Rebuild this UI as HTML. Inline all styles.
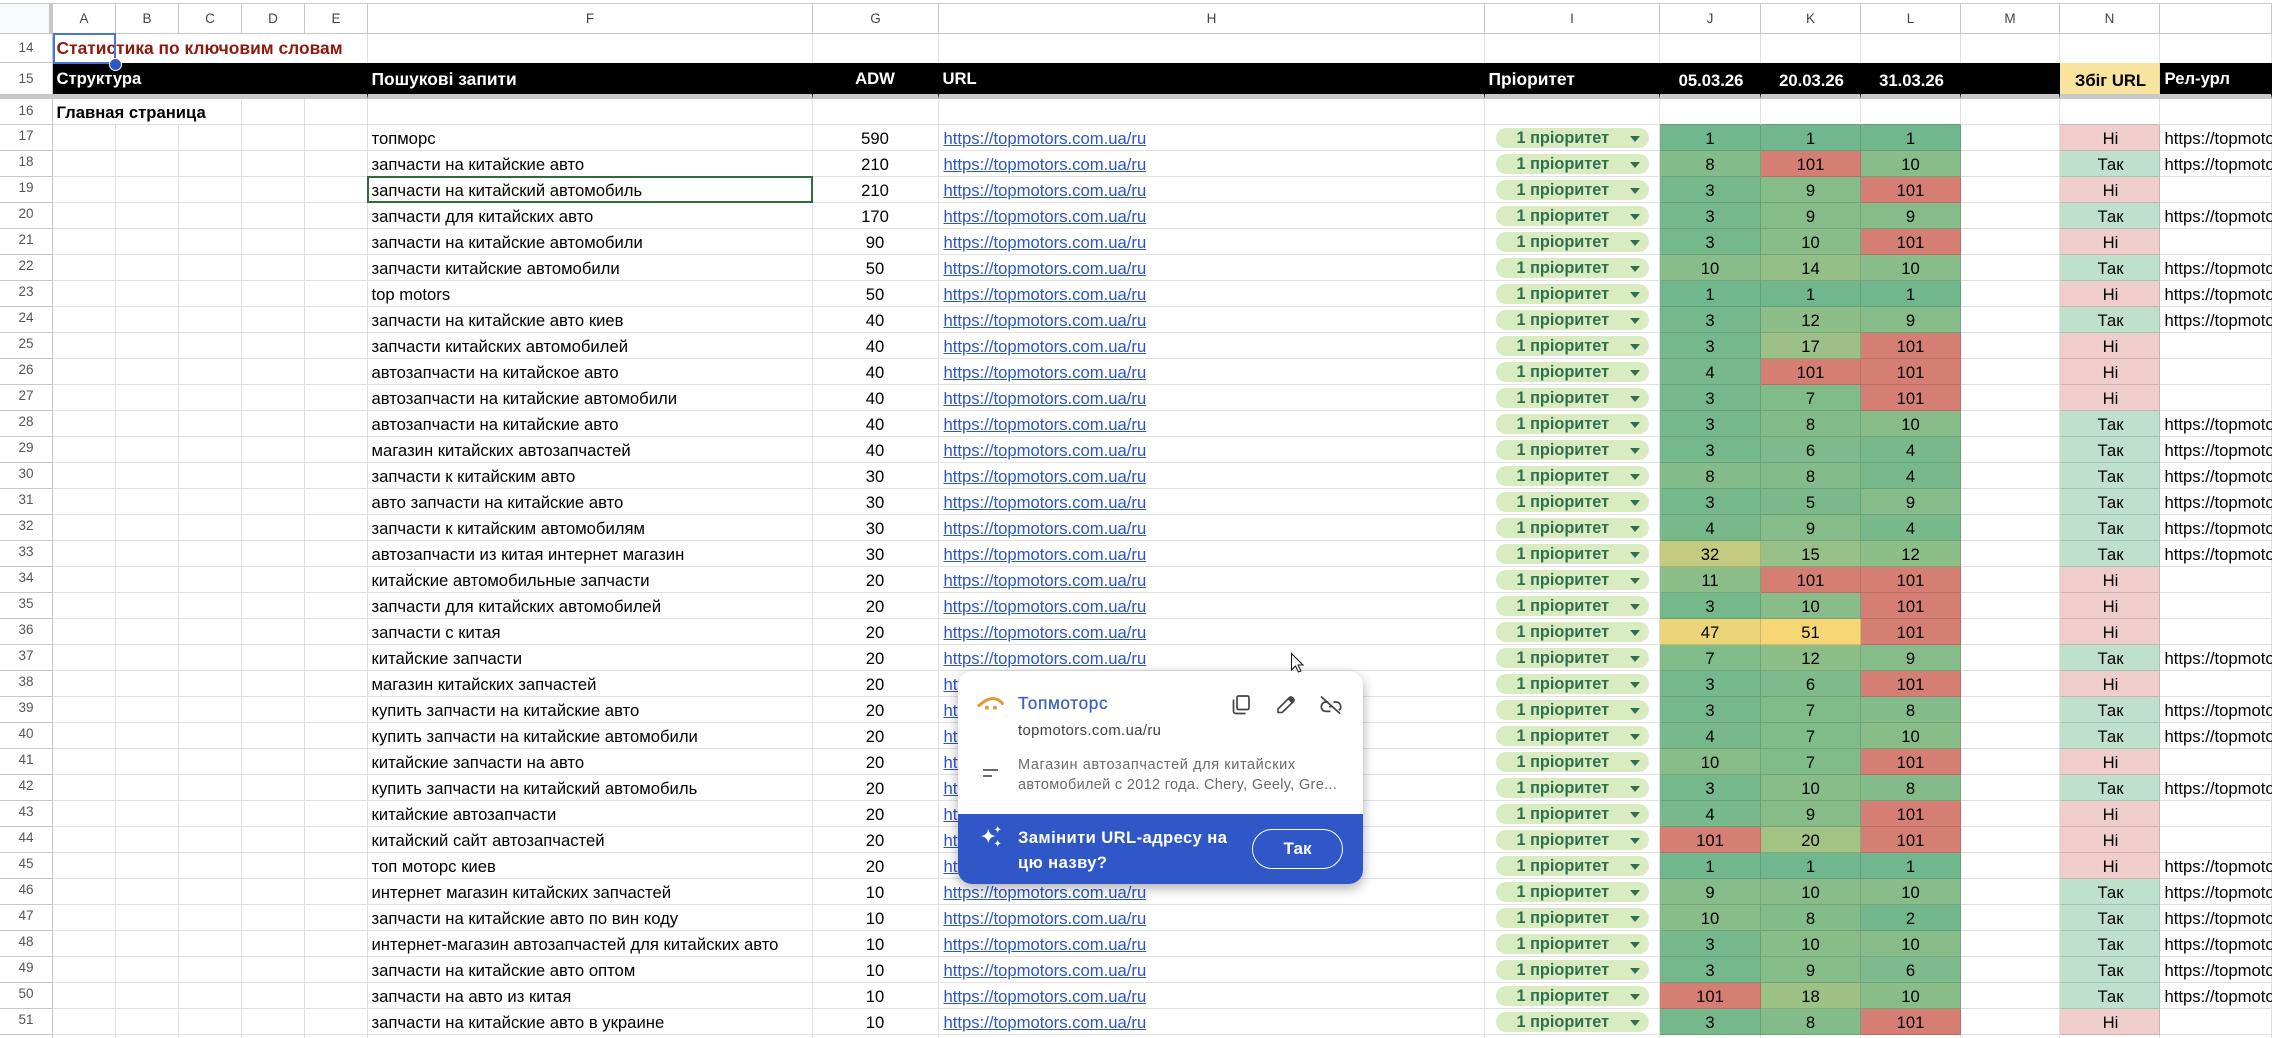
<!DOCTYPE html>
<html lang="uk"><head><meta charset="utf-8"><title>Статистика по ключовим словам</title>
<style>
html,body{margin:0;padding:0;width:2272px;height:1038px;overflow:hidden;background:#fff}
body{position:relative;font-family:"Liberation Sans",Arial,sans-serif;color:#000}
table{position:absolute;left:0;top:3px;width:2272px;table-layout:fixed;border-collapse:separate;border-spacing:0;font-size:16.67px;line-height:18px}
td,th{box-sizing:border-box;height:26px;padding:2px 4.5px 0 3.5px;border-right:1px solid #e1e1e1;border-bottom:1px solid #e1e1e1;white-space:nowrap;overflow:visible;font-weight:400;vertical-align:middle;text-align:left}
td:last-child{padding-left:4.5px}
th{border-right:1px solid #c7c7c7;border-bottom:1px solid #c7c7c7;text-align:center;font-size:13.5px;color:#555;padding:0 0 4px 0}
.hd th,.hd td{height:31px;border-top:1px solid #c7c7c7;border-bottom:1px solid #c7c7c7;border-right:1px solid #c7c7c7;text-align:center;font-size:13.5px;color:#444;padding:0}
.hd th{background:#f8f9fa;border-right:4px solid #c7c7c7}
.t14 td{height:29px;border-bottom:0;padding-top:0}
.t14 th{height:29px;padding:0}
.t15 td,.t15 th{height:36px;border-bottom:5px solid #c7c7c7}
.t15 th{padding:0}
.t15 td{background:#000;background-clip:padding-box;color:#fff;font-weight:700;border-right-color:#000;padding-top:1px}
.t15 .d{padding:5px 3px 0 5px}
.t15 .w{font-size:17.4px}
.t16 th{padding:0 0 1px 0}
.ttl{color:#8e1a0e;font-weight:700;font-size:17.4px}
b{font-weight:700}
.c{text-align:center}
a{color:#2c55c4;text-decoration:underline;margin-left:1px}
.s{display:block;position:relative;top:-1px;box-sizing:border-box;width:153px;height:20px;margin-left:7px;padding-left:21px;border-radius:10px;background:#d9ecc1;color:#2f6f4d;font-weight:700;font-size:16.3px;line-height:21px}
.s:after{content:"";position:absolute;left:134px;top:8px;border-left:5.5px solid transparent;border-right:5.5px solid transparent;border-top:6px solid #2f6f4d}
.h,.n{text-align:center;border-right-color:rgba(0,0,0,.13);border-bottom-color:rgba(0,0,0,.13)}
.h{padding:2px 4px 0 4px}
.n{padding:2px 2.5px 0 4.5px}
.tn{border-bottom-color:#6e9e82}
.tm{border-bottom-color:#c9b6b4}
.v1{background:#70b78d}.v2{background:#73b88d}.v3{background:#75b88c}.v4{background:#78b98c}.v5{background:#7bb98b}.v6{background:#7eba8b}.v7{background:#80bb8a}.v8{background:#83bb8a}.v9{background:#86bc89}.v10{background:#88bd89}.v11{background:#8bbd88}.v12{background:#8ebe88}.v14{background:#93bf87}.v15{background:#96c087}.v17{background:#9bc186}.v18{background:#9ec285}.v20{background:#a3c384}.v32{background:#c4ca7f}.v47{background:#ecd478}.v51{background:#f7d676}.v101{background:#d57f74}
.no{background:#eecdcb}.yes{background:#bee0cd}
.zb{background:#f9e49f!important;color:#000!important;text-align:center;border-right-color:#e8d58f!important;padding:5px 2.5px 0 4.5px!important}
.sel{position:absolute;box-sizing:border-box;left:53px;top:33px;width:63px;height:31px;border:2px solid #4a74d6}
.dot{position:absolute;left:109px;top:58px;width:13px;height:13px;box-sizing:border-box;border-radius:50%;background:#2f57c8;border:1px solid #fff}
.f19{position:absolute;box-sizing:border-box;left:367px;top:176px;width:446px;height:27px;border:2px solid #2f6b3c}
.pop{position:absolute;left:958px;top:671px;width:405px;height:213px;border-radius:14px;background:#fff;box-shadow:0 4px 12px rgba(0,0,0,.33);overflow:hidden}
.pop div{position:absolute;white-space:nowrap}
.p1{left:60px;top:22px;font-size:17.2px;line-height:20px;color:#3a5fc6;letter-spacing:.65px;-webkit-text-stroke:.25px #3a5fc6}
.p2{left:60px;top:50px;font-size:14.8px;line-height:20px;color:#3c3f43;letter-spacing:.4px}
.p3{left:60px;top:84px;font-size:14.5px;line-height:20px;color:#6a6a6a;letter-spacing:.6px}
.p3 span{letter-spacing:.32px}
.p4{left:0;top:143px;width:405px;height:70px;background:#2f57c8}
.p5{left:60px;top:153.500px;font-size:16.6px;line-height:25px;color:#fff;font-weight:700;letter-spacing:.4px}
.p6{left:294px;top:158px;box-sizing:border-box;width:91px;height:40px;border:1px solid #fff;border-radius:20px;color:#fff;font-weight:700;font-size:17px;line-height:38px;text-align:center}
svg{position:absolute;left:0;top:0}
</style></head><body>
<table>
<colgroup><col style="width:53px"><col style="width:63px"><col style="width:63px"><col style="width:63px"><col style="width:63px"><col style="width:63px"><col style="width:445px"><col style="width:126px"><col style="width:546px"><col style="width:175px"><col style="width:101px"><col style="width:100px"><col style="width:100px"><col style="width:99px"><col style="width:100px"><col style="width:112px"></colgroup>
<tr class="hd"><th></th><td>A</td><td>B</td><td>C</td><td>D</td><td>E</td><td>F</td><td>G</td><td>H</td><td>I</td><td>J</td><td>K</td><td>L</td><td>M</td><td>N</td><td></td></tr>
<tr class="t14"><th>14</th><td colspan="5"><span class="ttl">Статистика по ключовим словам</span></td><td></td><td></td><td></td><td></td><td></td><td></td><td></td><td></td><td></td><td></td></tr>
<tr class="t15"><th>15</th><td colspan="5">Структура</td><td class="w">Пошукові запити</td><td class="c">ADW</td><td>URL</td><td class="w">Пріоритет</td><td class="c d">05.03.26</td><td class="c d">20.03.26</td><td class="c d">31.03.26</td><td></td><td class="zb">Збіг URL</td><td>Рел-урл</td></tr>
<tr class="t16"><th>16</th><td colspan="3"><b>Главная страница</b></td><td></td><td></td><td></td><td></td><td></td><td></td><td class="tn"></td><td class="tn"></td><td class="tn"></td><td></td><td class="tm"></td><td></td></tr>
<tr><th>17</th><td></td><td></td><td></td><td></td><td></td><td>топморс</td><td class="c">590</td><td><a>https://topmotors.com.ua/ru</a></td><td><span class="s">1 пріоритет</span></td><td class="h v1">1</td><td class="h v1">1</td><td class="h v1">1</td><td></td><td class="n no">Ні</td><td>https://topmotors</td></tr>
<tr><th>18</th><td></td><td></td><td></td><td></td><td></td><td>запчасти на китайские авто</td><td class="c">210</td><td><a>https://topmotors.com.ua/ru</a></td><td><span class="s">1 пріоритет</span></td><td class="h v8">8</td><td class="h v101">101</td><td class="h v10">10</td><td></td><td class="n yes">Так</td><td>https://topmotors</td></tr>
<tr><th>19</th><td></td><td></td><td></td><td></td><td></td><td>запчасти на китайский автомобиль</td><td class="c">210</td><td><a>https://topmotors.com.ua/ru</a></td><td><span class="s">1 пріоритет</span></td><td class="h v3">3</td><td class="h v9">9</td><td class="h v101">101</td><td></td><td class="n no">Ні</td><td></td></tr>
<tr><th>20</th><td></td><td></td><td></td><td></td><td></td><td>запчасти для китайских авто</td><td class="c">170</td><td><a>https://topmotors.com.ua/ru</a></td><td><span class="s">1 пріоритет</span></td><td class="h v3">3</td><td class="h v9">9</td><td class="h v9">9</td><td></td><td class="n yes">Так</td><td>https://topmotors</td></tr>
<tr><th>21</th><td></td><td></td><td></td><td></td><td></td><td>запчасти на китайские автомобили</td><td class="c">90</td><td><a>https://topmotors.com.ua/ru</a></td><td><span class="s">1 пріоритет</span></td><td class="h v3">3</td><td class="h v10">10</td><td class="h v101">101</td><td></td><td class="n no">Ні</td><td></td></tr>
<tr><th>22</th><td></td><td></td><td></td><td></td><td></td><td>запчасти китайские автомобили</td><td class="c">50</td><td><a>https://topmotors.com.ua/ru</a></td><td><span class="s">1 пріоритет</span></td><td class="h v10">10</td><td class="h v14">14</td><td class="h v10">10</td><td></td><td class="n yes">Так</td><td>https://topmotors</td></tr>
<tr><th>23</th><td></td><td></td><td></td><td></td><td></td><td>top motors</td><td class="c">50</td><td><a>https://topmotors.com.ua/ru</a></td><td><span class="s">1 пріоритет</span></td><td class="h v1">1</td><td class="h v1">1</td><td class="h v1">1</td><td></td><td class="n no">Ні</td><td>https://topmotors</td></tr>
<tr><th>24</th><td></td><td></td><td></td><td></td><td></td><td>запчасти на китайские авто киев</td><td class="c">40</td><td><a>https://topmotors.com.ua/ru</a></td><td><span class="s">1 пріоритет</span></td><td class="h v3">3</td><td class="h v12">12</td><td class="h v9">9</td><td></td><td class="n yes">Так</td><td>https://topmotors</td></tr>
<tr><th>25</th><td></td><td></td><td></td><td></td><td></td><td>запчасти китайских автомобилей</td><td class="c">40</td><td><a>https://topmotors.com.ua/ru</a></td><td><span class="s">1 пріоритет</span></td><td class="h v3">3</td><td class="h v17">17</td><td class="h v101">101</td><td></td><td class="n no">Ні</td><td></td></tr>
<tr><th>26</th><td></td><td></td><td></td><td></td><td></td><td>автозапчасти на китайское авто</td><td class="c">40</td><td><a>https://topmotors.com.ua/ru</a></td><td><span class="s">1 пріоритет</span></td><td class="h v4">4</td><td class="h v101">101</td><td class="h v101">101</td><td></td><td class="n no">Ні</td><td></td></tr>
<tr><th>27</th><td></td><td></td><td></td><td></td><td></td><td>автозапчасти на китайские автомобили</td><td class="c">40</td><td><a>https://topmotors.com.ua/ru</a></td><td><span class="s">1 пріоритет</span></td><td class="h v3">3</td><td class="h v7">7</td><td class="h v101">101</td><td></td><td class="n no">Ні</td><td></td></tr>
<tr><th>28</th><td></td><td></td><td></td><td></td><td></td><td>автозапчасти на китайские авто</td><td class="c">40</td><td><a>https://topmotors.com.ua/ru</a></td><td><span class="s">1 пріоритет</span></td><td class="h v3">3</td><td class="h v8">8</td><td class="h v10">10</td><td></td><td class="n yes">Так</td><td>https://topmotors</td></tr>
<tr><th>29</th><td></td><td></td><td></td><td></td><td></td><td>магазин китайских автозапчастей</td><td class="c">40</td><td><a>https://topmotors.com.ua/ru</a></td><td><span class="s">1 пріоритет</span></td><td class="h v3">3</td><td class="h v6">6</td><td class="h v4">4</td><td></td><td class="n yes">Так</td><td>https://topmotors</td></tr>
<tr><th>30</th><td></td><td></td><td></td><td></td><td></td><td>запчасти к китайским авто</td><td class="c">30</td><td><a>https://topmotors.com.ua/ru</a></td><td><span class="s">1 пріоритет</span></td><td class="h v8">8</td><td class="h v8">8</td><td class="h v4">4</td><td></td><td class="n yes">Так</td><td>https://topmotors</td></tr>
<tr><th>31</th><td></td><td></td><td></td><td></td><td></td><td>авто запчасти на китайские авто</td><td class="c">30</td><td><a>https://topmotors.com.ua/ru</a></td><td><span class="s">1 пріоритет</span></td><td class="h v3">3</td><td class="h v5">5</td><td class="h v9">9</td><td></td><td class="n yes">Так</td><td>https://topmotors</td></tr>
<tr><th>32</th><td></td><td></td><td></td><td></td><td></td><td>запчасти к китайским автомобилям</td><td class="c">30</td><td><a>https://topmotors.com.ua/ru</a></td><td><span class="s">1 пріоритет</span></td><td class="h v4">4</td><td class="h v9">9</td><td class="h v4">4</td><td></td><td class="n yes">Так</td><td>https://topmotors</td></tr>
<tr><th>33</th><td></td><td></td><td></td><td></td><td></td><td>автозапчасти из китая интернет магазин</td><td class="c">30</td><td><a>https://topmotors.com.ua/ru</a></td><td><span class="s">1 пріоритет</span></td><td class="h v32">32</td><td class="h v15">15</td><td class="h v12">12</td><td></td><td class="n yes">Так</td><td>https://topmotors</td></tr>
<tr><th>34</th><td></td><td></td><td></td><td></td><td></td><td>китайские автомобильные запчасти</td><td class="c">20</td><td><a>https://topmotors.com.ua/ru</a></td><td><span class="s">1 пріоритет</span></td><td class="h v11">11</td><td class="h v101">101</td><td class="h v101">101</td><td></td><td class="n no">Ні</td><td></td></tr>
<tr><th>35</th><td></td><td></td><td></td><td></td><td></td><td>запчасти для китайских автомобилей</td><td class="c">20</td><td><a>https://topmotors.com.ua/ru</a></td><td><span class="s">1 пріоритет</span></td><td class="h v3">3</td><td class="h v10">10</td><td class="h v101">101</td><td></td><td class="n no">Ні</td><td></td></tr>
<tr><th>36</th><td></td><td></td><td></td><td></td><td></td><td>запчасти с китая</td><td class="c">20</td><td><a>https://topmotors.com.ua/ru</a></td><td><span class="s">1 пріоритет</span></td><td class="h v47">47</td><td class="h v51">51</td><td class="h v101">101</td><td></td><td class="n no">Ні</td><td></td></tr>
<tr><th>37</th><td></td><td></td><td></td><td></td><td></td><td>китайские запчасти</td><td class="c">20</td><td><a>https://topmotors.com.ua/ru</a></td><td><span class="s">1 пріоритет</span></td><td class="h v7">7</td><td class="h v12">12</td><td class="h v9">9</td><td></td><td class="n yes">Так</td><td>https://topmotors</td></tr>
<tr><th>38</th><td></td><td></td><td></td><td></td><td></td><td>магазин китайских запчастей</td><td class="c">20</td><td><a>https://topmotors.com.ua/ru</a></td><td><span class="s">1 пріоритет</span></td><td class="h v3">3</td><td class="h v6">6</td><td class="h v101">101</td><td></td><td class="n no">Ні</td><td></td></tr>
<tr><th>39</th><td></td><td></td><td></td><td></td><td></td><td>купить запчасти на китайские авто</td><td class="c">20</td><td><a>https://topmotors.com.ua/ru</a></td><td><span class="s">1 пріоритет</span></td><td class="h v3">3</td><td class="h v7">7</td><td class="h v8">8</td><td></td><td class="n yes">Так</td><td>https://topmotors</td></tr>
<tr><th>40</th><td></td><td></td><td></td><td></td><td></td><td>купить запчасти на китайские автомобили</td><td class="c">20</td><td><a>https://topmotors.com.ua/ru</a></td><td><span class="s">1 пріоритет</span></td><td class="h v4">4</td><td class="h v7">7</td><td class="h v10">10</td><td></td><td class="n yes">Так</td><td>https://topmotors</td></tr>
<tr><th>41</th><td></td><td></td><td></td><td></td><td></td><td>китайские запчасти на авто</td><td class="c">20</td><td><a>https://topmotors.com.ua/ru</a></td><td><span class="s">1 пріоритет</span></td><td class="h v10">10</td><td class="h v7">7</td><td class="h v101">101</td><td></td><td class="n no">Ні</td><td></td></tr>
<tr><th>42</th><td></td><td></td><td></td><td></td><td></td><td>купить запчасти на китайский автомобиль</td><td class="c">20</td><td><a>https://topmotors.com.ua/ru</a></td><td><span class="s">1 пріоритет</span></td><td class="h v3">3</td><td class="h v10">10</td><td class="h v8">8</td><td></td><td class="n yes">Так</td><td>https://topmotors</td></tr>
<tr><th>43</th><td></td><td></td><td></td><td></td><td></td><td>китайские автозапчасти</td><td class="c">20</td><td><a>https://topmotors.com.ua/ru</a></td><td><span class="s">1 пріоритет</span></td><td class="h v4">4</td><td class="h v9">9</td><td class="h v101">101</td><td></td><td class="n no">Ні</td><td></td></tr>
<tr><th>44</th><td></td><td></td><td></td><td></td><td></td><td>китайский сайт автозапчастей</td><td class="c">20</td><td><a>https://topmotors.com.ua/ru</a></td><td><span class="s">1 пріоритет</span></td><td class="h v101">101</td><td class="h v20">20</td><td class="h v101">101</td><td></td><td class="n no">Ні</td><td></td></tr>
<tr><th>45</th><td></td><td></td><td></td><td></td><td></td><td>топ моторс киев</td><td class="c">20</td><td><a>https://topmotors.com.ua/ru</a></td><td><span class="s">1 пріоритет</span></td><td class="h v1">1</td><td class="h v1">1</td><td class="h v1">1</td><td></td><td class="n no">Ні</td><td>https://topmotors</td></tr>
<tr><th>46</th><td></td><td></td><td></td><td></td><td></td><td>интернет магазин китайских запчастей</td><td class="c">10</td><td><a>https://topmotors.com.ua/ru</a></td><td><span class="s">1 пріоритет</span></td><td class="h v9">9</td><td class="h v10">10</td><td class="h v10">10</td><td></td><td class="n yes">Так</td><td>https://topmotors</td></tr>
<tr><th>47</th><td></td><td></td><td></td><td></td><td></td><td>запчасти на китайские авто по вин коду</td><td class="c">10</td><td><a>https://topmotors.com.ua/ru</a></td><td><span class="s">1 пріоритет</span></td><td class="h v10">10</td><td class="h v8">8</td><td class="h v2">2</td><td></td><td class="n yes">Так</td><td>https://topmotors</td></tr>
<tr><th>48</th><td></td><td></td><td></td><td></td><td></td><td>интернет-магазин автозапчастей для китайских авто</td><td class="c">10</td><td><a>https://topmotors.com.ua/ru</a></td><td><span class="s">1 пріоритет</span></td><td class="h v3">3</td><td class="h v10">10</td><td class="h v10">10</td><td></td><td class="n yes">Так</td><td>https://topmotors</td></tr>
<tr><th>49</th><td></td><td></td><td></td><td></td><td></td><td>запчасти на китайские авто оптом</td><td class="c">10</td><td><a>https://topmotors.com.ua/ru</a></td><td><span class="s">1 пріоритет</span></td><td class="h v3">3</td><td class="h v9">9</td><td class="h v6">6</td><td></td><td class="n yes">Так</td><td>https://topmotors</td></tr>
<tr><th>50</th><td></td><td></td><td></td><td></td><td></td><td>запчасти на авто из китая</td><td class="c">10</td><td><a>https://topmotors.com.ua/ru</a></td><td><span class="s">1 пріоритет</span></td><td class="h v101">101</td><td class="h v18">18</td><td class="h v10">10</td><td></td><td class="n yes">Так</td><td>https://topmotors</td></tr>
<tr><th>51</th><td></td><td></td><td></td><td></td><td></td><td>запчасти на китайские авто в украине</td><td class="c">10</td><td><a>https://topmotors.com.ua/ru</a></td><td><span class="s">1 пріоритет</span></td><td class="h v3">3</td><td class="h v8">8</td><td class="h v101">101</td><td></td><td class="n no">Ні</td><td></td></tr>
<tr><th></th><td></td><td></td><td></td><td></td><td></td><td></td><td></td><td></td><td></td><td></td><td></td><td></td><td></td><td></td><td></td></tr>
</table>
<div class="sel"></div><div class="dot"></div><div class="f19"></div>
<div class="pop">
<div class="p1">Топмоторс</div>
<div class="p2">topmotors.com.ua/ru</div>
<div class="p3">Магазин автозапчастей для китайских<br><span>автомобилей с 2012 года. Chery, Geely, Gre...</span></div>
<div class="p4"></div>
<div class="p5">Замінити URL-адресу на<br>цю назву?</div>
<div class="p6">Так</div>
</div>
<svg width="2272" height="1038" viewBox="0 0 2272 1038" fill="none">
<path d="M979 705.500C984 701 989 698.500 993 698.500C997 698.500 1000 700.500 1002.500 703.500" stroke="#e8963a" stroke-width="3" stroke-linecap="round"/>
<circle cx="986.800" cy="707.800" r="2" fill="#e8963a"/><circle cx="995" cy="707.800" r="2" fill="#e8963a"/>
<rect x="1237" y="696" width="12" height="13.500" rx="1.500" stroke="#444" stroke-width="1.700"/>
<path d="M1233.500 699.500V711C1233.500 712.500 1234.500 713.500 1236 713.500H1245.500" stroke="#444" stroke-width="1.700"/>
<path d="M1278 712.500V709L1289.500 697.500C1290.300 696.700 1291.500 696.700 1292.300 697.500L1293.500 698.700C1294.300 699.500 1294.300 700.700 1293.500 701.500L1282 712.500Z" stroke="#444" stroke-width="1.600" stroke-linejoin="round"/>
<path d="M1288 699.500L1289.500 697.500C1290.300 696.700 1291.500 696.700 1292.300 697.500L1293.500 698.700C1294.300 699.500 1294.300 700.700 1293.500 701.500L1291.800 703.300Z" fill="#444"/>
<path d="M1328 702H1326A4.700 4.700 0 0 0 1326 711.400H1330.500M1333.500 702H1336A4.700 4.700 0 0 1 1339 710.300M1329 706.700H1331.500" stroke="#444" stroke-width="1.700"/>
<path d="M1321.500 697L1339.500 713" stroke="#444" stroke-width="1.800" stroke-linecap="round"/>
<path d="M983 770H998M983 776H992" stroke="#555" stroke-width="1.800"/>
<path d="M988.300 828.500C989 833 991 835.500 995.800 836C991 836.700 989 839 988.300 843.500C987.600 839 985.500 836.700 980.800 836C985.500 835.500 987.600 833 988.300 828.500Z" fill="#fff"/>
<path d="M997.700 825.500C998 828 999 829 1001.500 829.300C999 829.700 998 830.700 997.700 833.200C997.300 830.700 996.300 829.700 993.900 829.300C996.300 829 997.300 828 997.700 825.500Z" fill="#fff"/>
<path d="M997.700 839.500C998 842 999 843 1001.500 843.300C999 843.700 998 844.700 997.700 847.200C997.300 844.700 996.300 843.700 993.900 843.300C996.300 843 997.300 842 997.700 839.500Z" fill="#fff"/>
<path d="M1291.500 653.500V670L1295.500 666L1298.500 672L1301 671L1298 665H1303Z" fill="#fff" stroke="#111" stroke-width="1"/>
</svg>
</body></html>
